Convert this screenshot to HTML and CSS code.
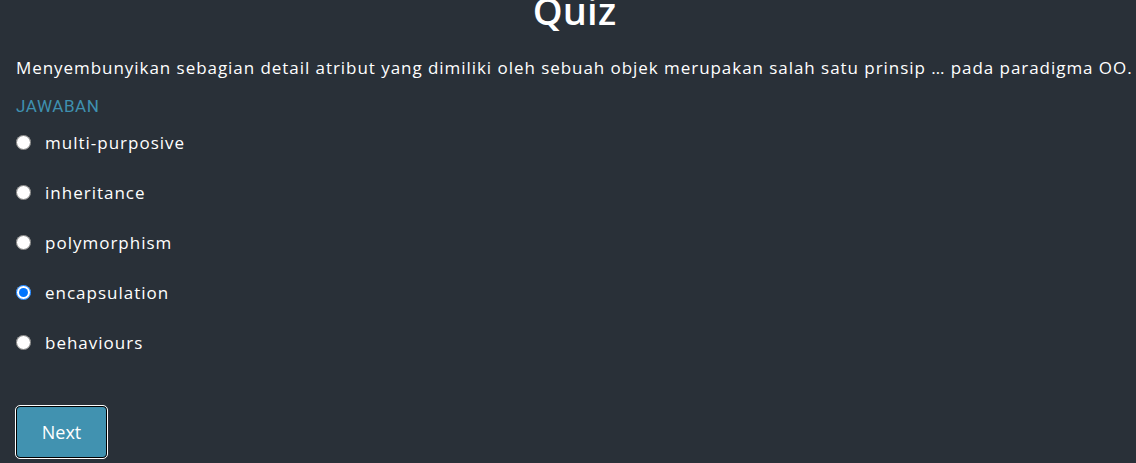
FILE: index.html
```html
<!DOCTYPE html>
<html>
<head>
<meta charset="utf-8">
<link rel="stylesheet" href="styles.css">
</head>
<body>
<div class="page">
  <h1 class="title">Quiz</h1>
  <p class="question">Menyembunyikan sebagian detail atribut yang dimiliki oleh sebuah objek merupakan salah satu prinsip … pada paradigma OO.</p>
  <div class="label">JAWABAN</div>
  <ul class="options">
    <li class="option"><input type="radio" name="a" id="o1"><label for="o1">multi-purposive</label></li>
    <li class="option"><input type="radio" name="a" id="o2"><label for="o2">inheritance</label></li>
    <li class="option"><input type="radio" name="a" id="o3"><label for="o3">polymorphism</label></li>
    <li class="option"><input type="radio" name="a" id="o4" checked><label for="o4">encapsulation</label></li>
    <li class="option"><input type="radio" name="a" id="o5"><label for="o5">behaviours</label></li>
  </ul>
  <button class="next">Next</button>
</div>
</body>
</html>
```
FILE: styles.css
```css
html, body {
  margin: 0;
  padding: 0;
  background: #293038;
  height: 100%;
  overflow: hidden;
}
.page {
  padding: 0 16px;
  font-family: "Open Sans", "DejaVu Sans", sans-serif;
  color: #ffffff;
}
.title {
  margin: -12px 0 0;
  padding-left: 13px;
  text-align: center;
  font-size: 38px;
  font-weight: 600;
  line-height: 44px;
  letter-spacing: 0.2px;
}
.question {
  margin: 24px 0 0;
  font-size: 17px;
  line-height: 24px;
  letter-spacing: 0.95px;
  white-space: nowrap;
}
.label {
  margin-top: 16px;
  font-family: Roboto, sans-serif;
  font-size: 17px;
  line-height: 20px;
  color: #3f90b0;
  letter-spacing: 0.6px;
}
.options {
  list-style: none;
  margin: 1px 0 0;
  padding: 0;
}
.option {
  display: flex;
  align-items: center;
  height: 50px;
  font-size: 17px;
  letter-spacing: 1px;
}
.option input {
  margin: 0 14px 0 0;
  width: 15px;
  height: 15px;
}
.next {
  margin-top: 39px;
  width: 91px;
  height: 52px;
  background: #4192b0;
  color: #fff;
  font-family: "Open Sans", sans-serif;
  font-size: 18px;
  border: 1px solid #000;
  outline: 1px solid #fff;
  border-radius: 4px;
}
```
